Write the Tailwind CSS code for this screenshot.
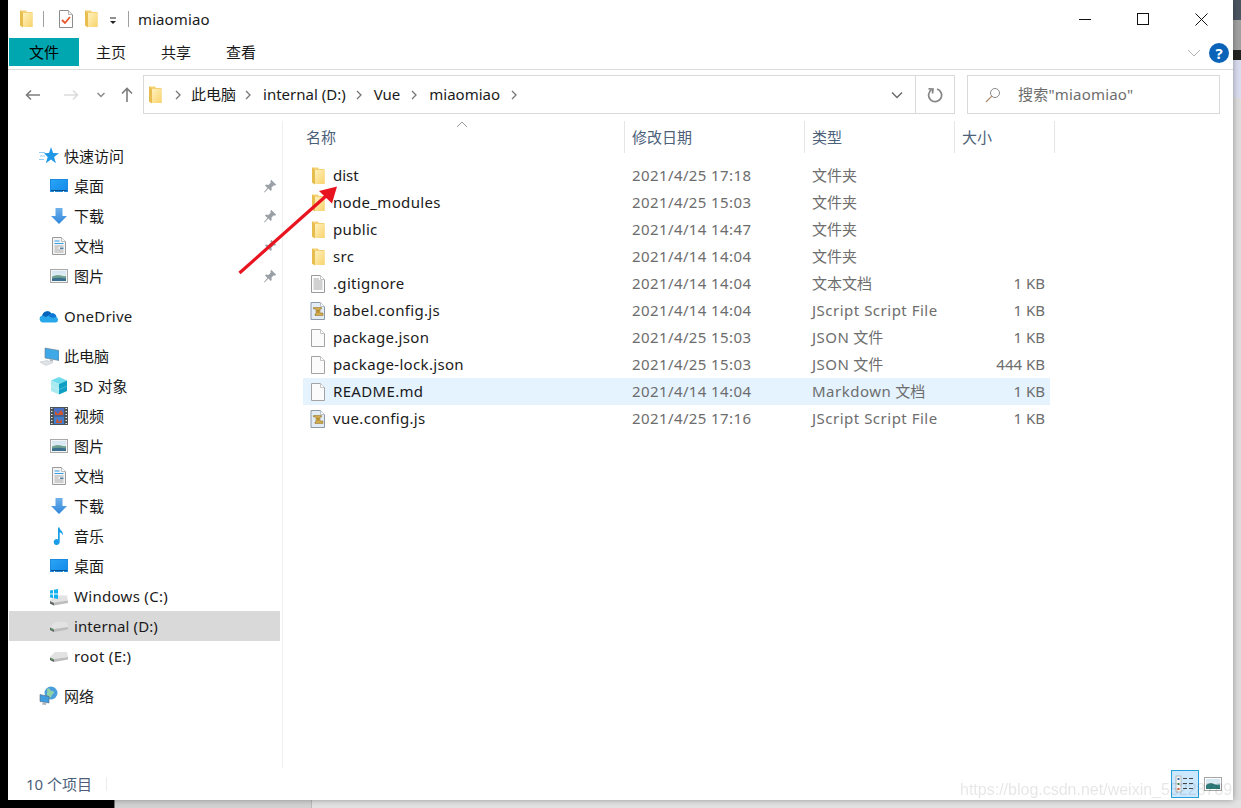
<!DOCTYPE html>
<html lang="zh-CN">
<head>
<meta charset="UTF-8">
<title>miaomiao</title>
<script src="https://cdn.jsdelivr.net/npm/@tailwindcss/browser@4"></script>
</head>
<body class="bg-black">
<!-- shared icons -->
<svg class="absolute w-0 h-0">
  <defs>
    <linearGradient id="gFolder" x1="0" y1="0" x2="1" y2="1"><stop offset="0" stop-color="#fff1bd"/><stop offset="1" stop-color="#f8d36c"/></linearGradient>
    <linearGradient id="gDesk" x1="0" y1="0" x2="1" y2="1"><stop offset="0" stop-color="#2aa5f5"/><stop offset="1" stop-color="#1289ea"/></linearGradient>
    <linearGradient id="gDown" x1="0" y1="0" x2="0" y2="1"><stop offset="0" stop-color="#6fb1ea"/><stop offset="1" stop-color="#2f86dc"/></linearGradient>
    <linearGradient id="gSky" x1="0" y1="0" x2="0" y2="1"><stop offset="0" stop-color="#d3e6f5"/><stop offset="1" stop-color="#eef4ee"/></linearGradient>
    <linearGradient id="gHelp" x1="0" y1="0" x2="0" y2="1"><stop offset="0" stop-color="#2a86d8"/><stop offset="1" stop-color="#0058ad"/></linearGradient>
  </defs>
  <symbol id="folder" viewBox="0 0 14 18">
    <path d="M0 .5h6l1 1.500h5.500v15H3L0 15.500z" fill="#f3d174"/>
    <path d="M3 3h9.500v14H3z" fill="url(#gFolder)"/>
    <path d="M0 .5L3 3v14.500L0 15.500z" fill="#e8bd50"/>
  </symbol>
  <symbol id="pin" viewBox="0 0 14 14">
    <path d="M8.200 .8l5 5-1.300 .9-1-.4-2.400 2.300.2 2.400-1 1-2.300-2.400-3.800 3.800L1 13l3.400-4.100L2 6.600l1-1 2.500.3 2.300-2.500-.4-1z" fill="#9aa0a6"/>
  </symbol>
  <symbol id="desk" viewBox="0 0 20 20">
    <rect x="1.500" y="3.500" width="17" height="12" fill="url(#gDesk)" stroke="#1b8ae0"/>
    <path d="M2 14.500h16" stroke="#0b4f8a"/><path d="M5 15.500h1M14 15.500h1" stroke="#fff"/>
  </symbol>
  <symbol id="down" viewBox="0 0 20 20">
    <path d="M6.500 2h7v8H18l-8 8-8-8h4.500z" fill="url(#gDown)"/>
  </symbol>
  <symbol id="doc" viewBox="0 0 20 20">
    <path d="M3.500 1.500h9l4 4v13h-13z" fill="#f4f4f4" stroke="#9a9a9a"/>
    <path d="M12.500 1.500v4h4" fill="#fff" stroke="#bdbdbd"/>
    <path d="M5.500 5h5M5.500 7.500h9" stroke="#35a0e8"/>
    <path d="M5.500 10h9M5.500 12h4M5.500 14h9M5.500 16h9" stroke="#a8a8a8"/>
    <path d="M11 11.500h3.500v1.500H11z" fill="#4f81a8"/>
  </symbol>
  <symbol id="pic" viewBox="0 0 20 20">
    <rect x="1.500" y="3.500" width="17" height="13" fill="#f5f5f5" stroke="#a9a9a9"/>
    <rect x="3" y="5" width="14" height="10" fill="url(#gSky)"/>
    <path d="M3 10.500c3-1.500 6-2 9-1s4 .5 5 .5v3H3z" fill="#6f9f8f"/>
    <path d="M3 12.500c4-1 8-1 14 0V15H3z" fill="#3a6f8f"/>
  </symbol>
  <symbol id="star" viewBox="0 0 20 20">
    <path d="M12 1l2.100 6.100 5.900 .1-4.900 3.900 1.800 6.200-4.900-3.700-5.200 3.700 1.900-6.200-3.700-3.900 5 -.1z" fill="#2098e8"/>
    <path d="M0 6.500h6M1 10h5M0 13.500h5" stroke="#8fcdf5"/>
  </symbol>
  <symbol id="cloud" viewBox="0 0 20 14">
    <path d="M4 13.500a3.500 3.500 0 0 1-.7-6.900A5 5 0 0 1 12.400 4.500a4 4 0 0 1 5 3.500 3 3 0 0 1-.4 5.500z" fill="#28a8ea"/>
    <path d="M3.300 6.600A5 5 0 0 1 12.400 4.500L7 8z" fill="#0364b8"/>
    <path d="M12.400 4.500a4 4 0 0 1 5 3.500L13 9 9 6.500z" fill="#0f78d4"/>
  </symbol>
  <symbol id="pc" viewBox="0 0 20 20">
    <path d="M6 2l14 2.500v10L6 12z" fill="#3fa9e8" stroke="#6c7a86" stroke-width=".6"/>
    <path d="M11 13l3 .6v2l-3-.6z" fill="#a9b4bc"/>
    <path d="M1 16l7-1.500 6 2-7 3z" fill="#dfe3e6" stroke="#b8bfc4" stroke-width=".5"/>
  </symbol>
  <symbol id="cube" viewBox="0 0 20 20">
    <path d="M10 1l8 3.500-8 3.500-8-3.500z" fill="#6fdcec"/>
    <path d="M2 4.500l8 3.500v10.500L2 15z" fill="#a8eaf0"/>
    <path d="M18 4.500L10 8v10.500l8-3.500z" fill="#0f9fc4"/>
    <path d="M2 9.500l8 3.500 8-3.500v1l-8 3.500-8-3.500z" fill="#ffffff" fill-opacity=".25"/>
  </symbol>
  <symbol id="film" viewBox="0 0 20 20">
    <rect x="1" y="1" width="18" height="18" fill="#4a5358"/>
    <path d="M2 2.500h1.500M2 5.500h1.500M2 8.500h1.500M2 11.500h1.500M2 14.500h1.500M2 17.500h1.500M16.500 2.500H18M16.500 5.500H18M16.500 8.500H18M16.500 11.500H18M16.500 14.500H18M16.500 17.500H18" stroke="#e8e8e8"/>
    <rect x="5" y="2" width="10" height="7.500" fill="#4a6fc0"/><rect x="5" y="10.500" width="10" height="7.500" fill="#3f7ed0"/>
    <path d="M6 5l3 3 3-4 2 3v2H6zM8 12l2 4 3-3v4H7z" fill="#d2552c"/>
  </symbol>
  <symbol id="note" viewBox="0 0 20 20">
    <path d="M9 1.500h1.500c.3 3 4 3.500 3.500 8-.7-2-2-2.700-3.300-3V16a3 3 0 1 1-1.700-2.600z" fill="#1a9de8"/>
  </symbol>
  <symbol id="drive" viewBox="0 0 20 20">
    <path d="M1 11l5-5h12l1 5-14 2z" fill="#e2e2e2"/>
    <path d="M1 11l4 2 14-2v2.500L5 16l-4-2z" fill="#bdbdbd"/>
    <path d="M1 11.800l4 2v2.200l-4-2z" fill="#5f6466"/>
    <path d="M2 13.200h2" stroke="#3fae4a"/>
  </symbol>
  <symbol id="win" viewBox="0 0 20 20">
    <g transform="translate(0 3.500)">
      <path d="M1 11l5-5h12l1 5-14 2z" fill="#e2e2e2"/>
      <path d="M1 11l4 2 14-2v2.500L5 16l-4-2z" fill="#bdbdbd"/>
      <path d="M1 11.800l4 2v2.200l-4-2z" fill="#5f6466"/>
    </g>
    <path d="M1 4.500l3-.5v3.500H1zM5 3.800L9 3v4.500H5zM1 8.500h3V12l-3-.5zM5 8.500h4V13l-4-.7z" fill="#14b0f0"/>
  </symbol>
  <symbol id="net" viewBox="0 0 20 20">
    <circle cx="12" cy="7" r="6.500" fill="#4a9edb"/>
    <path d="M9 2c3 1 2 3 4 3s3 2 1 3-1 3-3 4c-1-2-4-2-3-5s-1-3 1-5z" fill="#8fd0a8"/>
    <path d="M1 8.500l9 2v6.500l-9-1.500z" fill="#3f9de0" stroke="#5a6a78" stroke-width=".6"/>
    <path d="M4 16l3 .6V19l-4-.6z" fill="#a9b4bc"/>
  </symbol>
  <symbol id="txt" viewBox="0 0 16 18">
    <path d="M1.500 .5h9l4 4v13h-13z" fill="#fdfdfd" stroke="#9a9a9a"/>
    <path d="M10.500 .5v4h4" fill="#fff" stroke="#c4c4c4"/>
    <path d="M3.500 4h5.500M3.500 6h9M3.500 8h9M3.500 10h9M3.500 12h9M3.500 14h9" stroke="#a5a5a5"/>
  </symbol>
  <symbol id="blank" viewBox="0 0 16 18">
    <path d="M1.500 .5h9l4 4v13h-13z" fill="#fbfbfb" stroke="#a3a3a3"/>
    <path d="M10.500 .5v4h4" fill="#fff" stroke="#c4c4c4"/>
  </symbol>
  <symbol id="script" viewBox="0 0 16 18">
    <path d="M1 .5h9.500l4 4v13H1z" fill="#e3ebf4" stroke="#8d9aa8"/>
    <path d="M10.500 .5v4h4" fill="#fff" stroke="#b8c2cc"/>
    <path d="M3.500 5.500h8V7H10v4h3v2.500H5V12h1V7H3.500z" fill="#d2ac4e" stroke="#8a6a20" stroke-width=".5"/>
    <path d="M7 8.500h2M7 10h2" stroke="#8a6a20" stroke-width=".6"/>
  </symbol>
</svg>

<div class="relative w-[1241px] h-[808px] overflow-hidden bg-[#dcdcdc] text-[15px] text-[#1a1a1a] font-['Noto_Sans','Noto_Sans_CJK_SC',sans-serif]">
  <!-- desktop showing round the window -->
  <div class="absolute left-0 top-0 w-2 h-full bg-black"></div>
  <div class="absolute left-0 bottom-0 w-[114px] h-2 bg-black"></div>
  <div class="absolute left-[114px] bottom-0 w-[197px] h-2 bg-[#d2d2d2] border-l border-[#777]"></div>
  <div class="absolute left-[311px] bottom-0 w-[930px] h-2 bg-[#e2e2e2] border-l border-[#bbb]"></div>
  <div class="absolute right-0 top-0 w-2 h-[20px] bg-[#4a5560]"></div>
  <div class="absolute right-0 top-[20px] w-2 h-[30px] bg-[#a0a0a0]"></div>
  <div class="absolute right-0 top-[50px] w-2 h-[10px] bg-[#222]"></div>
  <div class="absolute right-0 top-[60px] w-2 h-[38px] bg-[#d9dcee]"></div>

  <!-- window -->
  <div class="relative ml-2 w-[1225px] h-[800px] bg-white flex flex-col shadow-[0_0_6px_rgba(0,0,0,0.35)]">

    <!-- title bar -->
    <div class="h-[38px] flex items-center shrink-0">
      <svg class="w-[14px] h-[18px] ml-[12px]"><use href="#folder"/></svg>
      <div class="w-px h-4 bg-[#a0a0a0] ml-[9px]"></div>
      <svg class="w-4 h-[20px] ml-[14px]" viewBox="0 0 16 20">
        <path d="M1.500 1.500h9l4 4v13h-13z" fill="#fff" stroke="#8c8c8c"/>
        <path d="M10.500 1.500v4h4" fill="#eee" stroke="#b5b5b5"/>
        <path d="M4 11l3 3 5-6" fill="none" stroke="#e8552a" stroke-width="1.800"/>
      </svg>
      <svg class="w-[14px] h-[18px] ml-[11px]"><use href="#folder"/></svg>
      <svg class="w-2 h-2 ml-[10px] mt-1" viewBox="0 0 8 8"><path d="M1 1h6" stroke="#222"/><path d="M1 4h6L4 7z" fill="#222"/></svg>
      <div class="w-px h-4 bg-[#a0a0a0] ml-[11px]"></div>
      <span class="ml-[9px] text-[15px] tracking-[0.1px]">miaomiao</span>
      <div class="ml-auto flex items-center">
        <svg class="w-3 h-3" viewBox="0 0 12 12"><path d="M0 6.500h12" stroke="#111"/></svg>
        <svg class="w-3 h-3 ml-[46px]" viewBox="0 0 12 12"><rect x=".5" y=".5" width="11" height="11" fill="none" stroke="#111"/></svg>
        <svg class="w-[13px] h-[13px] ml-[46px] mr-[25px]" viewBox="0 0 13 13"><path d="M.5 .5l12 12M12.500 .5l-12 12" stroke="#111"/></svg>
      </div>
    </div>

    <!-- ribbon tabs -->
    <div class="h-[32px] shrink-0 flex border-b border-[#dadbdc]">
      <div class="ml-px w-[70px] h-[28px] pt-px bg-[#00a7b1] flex items-center justify-center text-black">文件</div>
      <div class="w-[65px] h-[28px] pt-px pr-px flex items-center justify-center">主页</div>
      <div class="w-[65px] h-[28px] pt-px pr-px flex items-center justify-center">共享</div>
      <div class="w-[65px] h-[28px] pt-px pr-px flex items-center justify-center">查看</div>
      <div class="ml-auto h-[28px] pt-[2px] flex items-center pr-[4px]">
        <svg class="w-[14px] h-2" viewBox="0 0 14 8"><path d="M1 1l6 6 6-6" fill="none" stroke="#b5b5b5"/></svg>
        <div class="ml-[8px] w-5 h-5 rounded-full bg-[#0a63b8] flex items-center justify-center text-white text-[15px] font-bold">?</div>
      </div>
    </div>

    <!-- address row -->
    <div class="h-[51px] shrink-0 flex items-start pt-[5px]">
      <div class="w-[135px] h-[39px] flex items-center shrink-0">
        <svg class="w-4 h-3 ml-[17px]" viewBox="0 0 16 12"><path d="M15 6H1.500M6 1.500L1.500 6 6 10.500" fill="none" stroke="#7d7d7d" stroke-width="1.600"/></svg>
        <svg class="w-4 h-3 ml-[22px]" viewBox="0 0 16 12"><path d="M1 6h13.500M10 1.500L14.500 6 10 10.500" fill="none" stroke="#dcdcdc" stroke-width="1.600"/></svg>
        <svg class="w-2 h-[6px] ml-[18px]" viewBox="0 0 8 6"><path d="M.5 1L4 4.500 7.500 1" fill="none" stroke="#8a8a8a" stroke-width="1.500"/></svg>
        <svg class="w-3 h-4 ml-[16px]" viewBox="0 0 12 16"><path d="M6 15V1.500M1 6.500l5-5 5 5" fill="none" stroke="#7d7d7d" stroke-width="1.600"/></svg>
      </div>
      <div class="w-[812px] h-[39px] shrink-0 border border-[#d9d9d9] flex items-center">
        <svg class="w-[14px] h-[18px] ml-[5px]"><use href="#folder"/></svg>
        <svg class="w-[6px] h-[10px] ml-[12px]" viewBox="0 0 6 10"><path d="M1 1l4 4-4 4" fill="none" stroke="#777" stroke-width="1.300"/></svg>
        <span class="ml-[10px]">此电脑</span>
        <svg class="w-[6px] h-[10px] ml-[9px]" viewBox="0 0 6 10"><path d="M1 1l4 4-4 4" fill="none" stroke="#777" stroke-width="1.300"/></svg>
        <span class="ml-[12px]">internal (D:)</span>
        <svg class="w-[6px] h-[10px] ml-[10px]" viewBox="0 0 6 10"><path d="M1 1l4 4-4 4" fill="none" stroke="#777" stroke-width="1.300"/></svg>
        <span class="ml-[12px]">Vue</span>
        <svg class="w-[6px] h-[10px] ml-[11px]" viewBox="0 0 6 10"><path d="M1 1l4 4-4 4" fill="none" stroke="#777" stroke-width="1.300"/></svg>
        <span class="ml-[12px]">miaomiao</span>
        <svg class="w-[6px] h-[10px] ml-[11px]" viewBox="0 0 6 10"><path d="M1 1l4 4-4 4" fill="none" stroke="#777" stroke-width="1.300"/></svg>
        <svg class="w-3 h-2 ml-auto mr-[12px]" viewBox="0 0 12 8"><path d="M1 1.500l5 5 5-5" fill="none" stroke="#6b6b6b" stroke-width="1.500"/></svg>
        <div class="w-[39px] h-full border-l border-[#d9d9d9] flex items-center justify-center">
          <svg class="w-4 h-4" viewBox="0 0 16 16"><path d="M4.500 2.800A6.500 6.500 0 1 0 10 2" fill="none" stroke="#858585" stroke-width="1.700"/><path d="M1.500 1.800l4.500 .2-.5 4.500" fill="none" stroke="#858585" stroke-width="1.700"/></svg>
        </div>
      </div>
      <div class="ml-[12px] w-[253px] h-[39px] shrink-0 border border-[#d9d9d9] flex items-center text-[#6d6d6d]">
        <svg class="w-4 h-4 ml-[17px]" viewBox="0 0 16 16"><circle cx="10" cy="6" r="4.500" fill="none" stroke="#8a8a8a"/><path d="M6.800 9.200L1 15" stroke="#b08a68" stroke-width="1.200"/></svg>
        <span class="ml-[17px] tracking-[0.2px]">搜索"miaomiao"</span>
      </div>
    </div>

    <!-- main area -->
    <div class="flex-1 flex min-h-0">
      <!-- nav pane -->
      <div class="w-[275px] shrink-0 border-r border-[#f0f0f0] pt-[20px] pl-px pr-[2px]">
        <div class="h-[30px] flex items-center gap-[5px] pl-[30px]"><svg class="w-5 h-5"><use href="#star"/></svg>快速访问</div>
        <div class="h-[30px] flex items-center gap-[5px] pl-[40px] pr-[3px]"><svg class="w-5 h-5"><use href="#desk"/></svg>桌面<svg class="w-[14px] h-[14px] ml-auto"><use href="#pin"/></svg></div>
        <div class="h-[30px] flex items-center gap-[5px] pl-[40px] pr-[3px]"><svg class="w-5 h-5"><use href="#down"/></svg>下载<svg class="w-[14px] h-[14px] ml-auto"><use href="#pin"/></svg></div>
        <div class="h-[30px] flex items-center gap-[5px] pl-[40px] pr-[3px]"><svg class="w-5 h-5"><use href="#doc"/></svg>文档<svg class="w-[14px] h-[14px] ml-auto"><use href="#pin"/></svg></div>
        <div class="h-[30px] flex items-center gap-[5px] pl-[40px] pr-[3px]"><svg class="w-5 h-5"><use href="#pic"/></svg>图片<svg class="w-[14px] h-[14px] ml-auto"><use href="#pin"/></svg></div>

        <div class="h-[30px] mt-[10px] flex items-center gap-[5px] pl-[30px] tracking-[0.25px]"><svg class="w-5 h-[14px]"><use href="#cloud"/></svg>OneDrive</div>

        <div class="h-[30px] mt-[10px] flex items-center gap-[5px] pl-[30px]"><svg class="w-5 h-5"><use href="#pc"/></svg>此电脑</div>
        <div class="h-[30px] flex items-center gap-[5px] pl-[40px]"><svg class="w-5 h-5"><use href="#cube"/></svg>3D 对象</div>
        <div class="h-[30px] flex items-center gap-[5px] pl-[40px]"><svg class="w-5 h-5"><use href="#film"/></svg>视频</div>
        <div class="h-[30px] flex items-center gap-[5px] pl-[40px]"><svg class="w-5 h-5"><use href="#pic"/></svg>图片</div>
        <div class="h-[30px] flex items-center gap-[5px] pl-[40px]"><svg class="w-5 h-5"><use href="#doc"/></svg>文档</div>
        <div class="h-[30px] flex items-center gap-[5px] pl-[40px]"><svg class="w-5 h-5"><use href="#down"/></svg>下载</div>
        <div class="h-[30px] flex items-center gap-[5px] pl-[40px]"><svg class="w-5 h-5"><use href="#note"/></svg>音乐</div>
        <div class="h-[30px] flex items-center gap-[5px] pl-[40px]"><svg class="w-5 h-5"><use href="#desk"/></svg>桌面</div>
        <div class="h-[30px] flex items-center gap-[5px] pl-[40px] tracking-[0.3px]"><svg class="w-5 h-5"><use href="#win"/></svg>Windows (C:)</div>
        <div class="h-[30px] flex items-center gap-[5px] pl-[40px] bg-[#d9d9d9] tracking-[0.1px]"><svg class="w-5 h-5"><use href="#drive"/></svg>internal (D:)</div>
        <div class="h-[30px] flex items-center gap-[5px] pl-[40px] tracking-[0.3px]"><svg class="w-5 h-5"><use href="#drive"/></svg>root (E:)</div>

        <div class="h-[30px] mt-[10px] flex items-center gap-[5px] pl-[30px]"><svg class="w-5 h-5"><use href="#net"/></svg>网络</div>
      </div>

      <!-- file list -->
      <div class="flex-1 min-w-0">
        <div class="relative h-[32px] flex text-[#4c607a]">
          <svg class="absolute left-[173px] top-0 w-3 h-[7px]" viewBox="0 0 12 7"><path d="M1 6l5-5 5 5" fill="none" stroke="#9a9a9a"/></svg>
          <div class="w-[341px] pl-[23px] flex items-center">名称</div>
          <div class="w-[180px] pl-[7px] flex items-center border-l border-[#e5e5e5]">修改日期</div>
          <div class="w-[150px] pl-[7px] flex items-center border-l border-[#e5e5e5]">类型</div>
          <div class="w-[101px] pl-[7px] flex items-center border-x border-[#e5e5e5]">大小</div>
        </div>
        <div class="ml-[20px] w-[747px] pt-[9px] text-[#6d6d6d]">
          <div class="h-[27px] flex items-center"><div class="w-[321px] flex items-center gap-[7px] pl-[7px] text-[#1a1a1a]"><svg class="w-4 h-[18px] ml-px"><use href="#folder"/></svg><span class="-ml-px">dist</span></div><div class="w-[180px] pl-2 tracking-[0.4px]">2021/4/25 17:18</div><div class="w-[150px] pl-2">文件夹</div></div>
          <div class="h-[27px] flex items-center"><div class="w-[321px] flex items-center gap-[7px] pl-[7px] text-[#1a1a1a]"><svg class="w-4 h-[18px] ml-px"><use href="#folder"/></svg><span class="-ml-px tracking-[0.33px]">node_modules</span></div><div class="w-[180px] pl-2 tracking-[0.4px]">2021/4/25 15:03</div><div class="w-[150px] pl-2">文件夹</div></div>
          <div class="h-[27px] flex items-center"><div class="w-[321px] flex items-center gap-[7px] pl-[7px] text-[#1a1a1a]"><svg class="w-4 h-[18px] ml-px"><use href="#folder"/></svg><span class="-ml-px tracking-[0.33px]">public</span></div><div class="w-[180px] pl-2 tracking-[0.4px]">2021/4/14 14:47</div><div class="w-[150px] pl-2">文件夹</div></div>
          <div class="h-[27px] flex items-center"><div class="w-[321px] flex items-center gap-[7px] pl-[7px] text-[#1a1a1a]"><svg class="w-4 h-[18px] ml-px"><use href="#folder"/></svg><span class="-ml-px tracking-[0.33px]">src</span></div><div class="w-[180px] pl-2 tracking-[0.4px]">2021/4/14 14:04</div><div class="w-[150px] pl-2">文件夹</div></div>
          <div class="h-[27px] flex items-center"><div class="w-[321px] flex items-center gap-[7px] pl-[7px] text-[#1a1a1a]"><svg class="w-4 h-[18px]"><use href="#txt"/></svg><span class="tracking-[0.33px]">.gitignore</span></div><div class="w-[180px] pl-2 tracking-[0.4px]">2021/4/14 14:04</div><div class="w-[150px] pl-2">文本文档</div><div class="w-[96px] pr-[5px] text-right">1 KB</div></div>
          <div class="h-[27px] flex items-center"><div class="w-[321px] flex items-center gap-[7px] pl-[7px] text-[#1a1a1a]"><svg class="w-4 h-[18px]"><use href="#script"/></svg><span class="tracking-[0.33px]">babel.config.js</span></div><div class="w-[180px] pl-2 tracking-[0.4px]">2021/4/14 14:04</div><div class="w-[150px] pl-2 tracking-[0.5px]">JScript Script File</div><div class="w-[96px] pr-[5px] text-right">1 KB</div></div>
          <div class="h-[27px] flex items-center"><div class="w-[321px] flex items-center gap-[7px] pl-[7px] text-[#1a1a1a]"><svg class="w-4 h-[18px]"><use href="#blank"/></svg><span class="tracking-[0.33px]">package.json</span></div><div class="w-[180px] pl-2 tracking-[0.4px]">2021/4/25 15:03</div><div class="w-[150px] pl-2"><span class="tracking-[0.5px]">JSON</span> 文件</div><div class="w-[96px] pr-[5px] text-right">1 KB</div></div>
          <div class="h-[27px] flex items-center"><div class="w-[321px] flex items-center gap-[7px] pl-[7px] text-[#1a1a1a]"><svg class="w-4 h-[18px]"><use href="#blank"/></svg><span class="tracking-[0.33px]">package-lock.json</span></div><div class="w-[180px] pl-2 tracking-[0.4px]">2021/4/25 15:03</div><div class="w-[150px] pl-2"><span class="tracking-[0.5px]">JSON</span> 文件</div><div class="w-[96px] pr-[5px] text-right">444 KB</div></div>
          <div class="h-[27px] flex items-center bg-[#e5f3ff]"><div class="w-[321px] flex items-center gap-[7px] pl-[7px] text-[#1a1a1a]"><svg class="w-4 h-[18px]"><use href="#blank"/></svg><span class="tracking-[0.33px]">README.md</span></div><div class="w-[180px] pl-2 tracking-[0.4px]">2021/4/14 14:04</div><div class="w-[150px] pl-2"><span class="tracking-[0.5px]">Markdown</span> 文档</div><div class="w-[96px] pr-[5px] text-right">1 KB</div></div>
          <div class="h-[27px] flex items-center"><div class="w-[321px] flex items-center gap-[7px] pl-[7px] text-[#1a1a1a]"><svg class="w-4 h-[18px]"><use href="#script"/></svg><span class="tracking-[0.33px]">vue.config.js</span></div><div class="w-[180px] pl-2 tracking-[0.4px]">2021/4/25 17:16</div><div class="w-[150px] pl-2 tracking-[0.5px]">JScript Script File</div><div class="w-[96px] pr-[5px] text-right">1 KB</div></div>
        </div>
      </div>
    </div>

    <!-- status bar -->
    <div class="h-[32px] shrink-0 flex items-center text-[#4c607a]">
      <span class="ml-[18px]">10 个项目</span>
      <div class="ml-[14px] w-px h-[14px] bg-[#ececec]"></div>
      <div class="ml-auto mr-[11px] flex items-center">
        <div class="w-[28px] h-[28px] border border-[#26a0da] bg-[#cce8ff] flex items-center justify-center">
          <svg class="w-5 h-5" viewBox="0 0 20 20">
            <rect x="1" y="2" width="5" height="16" fill="#f6f6f6" stroke="#9a9a9a" stroke-width=".6"/>
            <path d="M2.500 4h2v2h-2z" fill="#3a6fa8"/><path d="M2.500 9h2v2h-2z" fill="#3a7f5a"/><path d="M2.500 14h2v2h-2z" fill="#c9603a"/>
            <path d="M8 4.500h4M14 4.500h4M8 9.500h4M14 9.500h4M8 14.500h4M14 14.500h4" stroke="#4a4a4a"/>
          </svg>
        </div>
        <svg class="ml-[5px] w-[18px] h-[14px]" viewBox="0 0 18 14">
          <rect x=".5" y=".5" width="17" height="13" fill="#fff" stroke="#a5a5a5"/>
          <rect x="2" y="2" width="14" height="10" fill="url(#gSky)"/>
          <path d="M2 8c3-2 6-2 8-1s4 .5 6 .5V12H2z" fill="#2f7a7a"/>
        </svg>
      </div>
    </div>
  </div>

  <!-- red annotation arrow -->
  <svg class="absolute left-0 top-0 w-[1241px] h-[808px] pointer-events-none" viewBox="0 0 1241 808">
    <path d="M239.500 273L326 196" stroke="#e8141f" stroke-width="3.200"/>
    <path d="M337 186.500L319 191 332 203.500z" fill="#e8141f"/>
  </svg>

  <!-- watermark -->
  <div class="absolute left-[960px] top-[779px] text-[16px] leading-[22px] whitespace-nowrap text-black/10 blur-[0.4px] font-['Liberation_Sans',sans-serif]">https://blog.csdn.net/weixin_55228789</div>
</div>
</body>
</html>
